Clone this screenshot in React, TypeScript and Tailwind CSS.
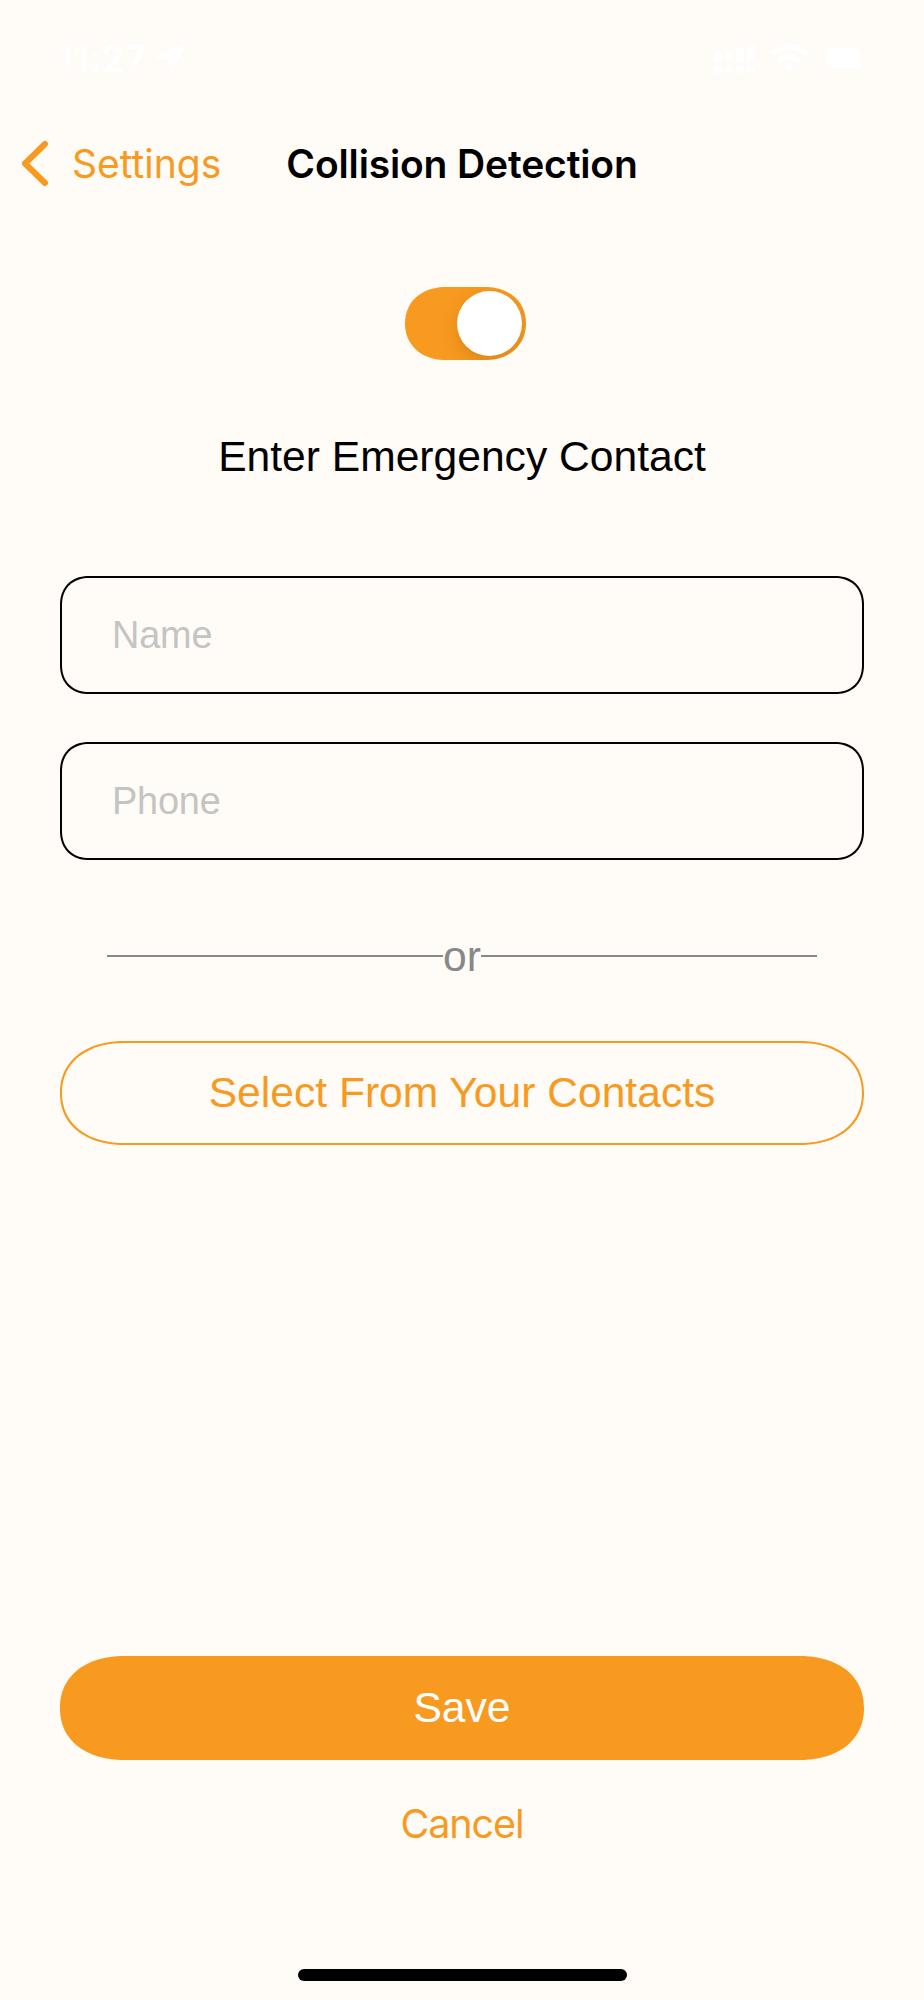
import React, { useState } from 'react';

const LocationIcon: React.FC = () => (
  <svg className="w-[30px] h-[28px]" viewBox="0 0 30 28" fill="white">
    <path d="M27 .6 2 11.2c-2.400 1-1.900 3.300.5 3.300l10.700.1.100 10.800c0 2.600 2.400 3 3.500.6L28.800 2.200C29.300.8 28.400 0 27 .6z" />
  </svg>
);

const SignalIcon: React.FC = () => (
  <svg className="w-[42px] h-[30px]" viewBox="0 0 42 30" fill="white">
    <rect x="0.500" y="9" width="7" height="9" rx="2" />
    <rect x="11.500" y="6.500" width="7" height="11.500" rx="2" />
    <rect x="22" y="3.500" width="7.500" height="14.500" rx="2" />
    <rect x="33" y="0" width="7.500" height="18" rx="2" />
    <circle cx="4" cy="25.500" r="4" />
    <circle cx="15" cy="25.500" r="4" />
    <circle cx="26" cy="25.500" r="4" />
    <circle cx="36.700" cy="25.500" r="4" />
  </svg>
);

const WifiIcon: React.FC = () => (
  <svg className="w-[40px] h-[28px]" viewBox="0 0 40 28" fill="none" stroke="white" strokeWidth="5.500">
    <path d="M2.500 10.200a25 25 0 0 1 35 0" />
    <path d="M9 17.300a16 16 0 0 1 22 0" />
    <path d="M20 27.500l-5.500-5.400a8 8 0 0 1 11 0z" fill="white" stroke="none" />
  </svg>
);

const BatteryIcon: React.FC = () => (
  <svg className="w-[60px] h-[29px]" viewBox="0 0 60 29" fill="white">
    <rect x="1" y="1" width="52" height="27" rx="8" fill="none" stroke="white" strokeOpacity="0.400" strokeWidth="2" />
    <rect x="4.500" y="4.500" width="33.500" height="19.500" rx="4.500" />
    <path d="M56 10v9c2-.8 3-2.500 3-4.500s-1-3.700-3-4.500z" fillOpacity="0.400" />
  </svg>
);

interface ContactFieldProps {
  label: string;
  type: string;
  value: string;
  onChange: (value: string) => void;
}

const ContactField: React.FC<ContactFieldProps> = ({ label, type, value, onChange }) => (
  <input
    type={type}
    value={value}
    placeholder={label}
    aria-label={label}
    onChange={(e) => onChange(e.target.value)}
    className="block w-full h-[118px] px-[50px] border-2 border-black rounded-[29px] [corner-shape:superellipse(1.14)] bg-transparent text-[37.9px] tracking-[-0.2px] text-black placeholder:text-[#c4c4c2] outline-none"
  />
);

export default function App() {
  const [enabled, setEnabled] = useState(true);
  const [name, setName] = useState('');
  const [phone, setPhone] = useState('');

  return (
    <div className="w-[924px] h-[2000px] flex flex-col bg-[#fffcf7] overflow-hidden font-['Liberation_Sans',Arial,sans-serif]">
      {/* Status bar */}
      <div className="h-[100px] shrink-0 flex items-start justify-between pl-[58px] pr-[42px] pt-[44px] text-white">
        <div className="flex items-start gap-[10px]">
          <span className="w-[88px] text-[37px] leading-[30px] font-semibold tracking-[0.2px] whitespace-nowrap font-['Inter',sans-serif]">11:27</span>
          <LocationIcon />
        </div>
        <div className="flex items-start gap-[13px]">
          <SignalIcon />
          <WifiIcon />
          <BatteryIcon />
        </div>
      </div>

      {/* Navigation */}
      <header className="h-[128px] shrink-0 grid grid-cols-[1fr_352px_1fr] items-center font-['Inter',sans-serif]">
        <button className="flex items-center pl-[20px] text-[#f89a1f]">
          <svg className="w-[30px] h-[48px]" viewBox="0 0 30 48" fill="none" stroke="currentColor" strokeWidth="6" strokeLinecap="round" strokeLinejoin="round">
            <path d="M25 4 5 23.500 25 43" />
          </svg>
          <span className="ml-[22px] text-[39px] leading-[48px] whitespace-nowrap">Settings</span>
        </button>
        <h1 className="text-[39px] leading-[48px] font-semibold tracking-[-0.15px] text-black text-center whitespace-nowrap">Collision Detection</h1>
      </header>

      <main className="flex-1 flex flex-col items-center px-[60px] pt-[59px]">
        <button
          role="switch"
          aria-checked={enabled}
          aria-label="Collision detection"
          onClick={() => setEnabled(!enabled)}
          className={`w-[121px] h-[73px] p-[4px] ml-[6px] flex shrink-0 items-center rounded-[41px/36.5px] [corner-shape:superellipse(1.1)] overflow-hidden ${enabled ? 'justify-end bg-[#f89a1f]' : 'justify-start bg-gray-300'}`}
        >
          <span className="w-[65px] h-[65px] rounded-full bg-white shadow-[0_6px_18px_rgba(0,0,0,0.13)]" />
        </button>

        <h2 className="mt-[72px] text-[42.6px] leading-[48px] text-black whitespace-nowrap">Enter Emergency Contact</h2>

        <div className="w-full mt-[96px] flex flex-col gap-[48px]">
          <ContactField label="Name" type="text" value={name} onChange={setName} />
          <ContactField label="Phone" type="tel" value={phone} onChange={setPhone} />
        </div>

        <div className="w-full mt-[72px] px-[47px] h-[48px] flex items-center text-[#88888b]">
          <div className="flex-1 h-[2px] bg-[#88888b]" />
          <span className="text-[42.6px] leading-[48px]">or</span>
          <div className="flex-1 h-[2px] bg-[#88888b]" />
        </div>

        <button className="w-full h-[104px] mt-[61px] shrink-0 border-2 border-[#f89a1f] rounded-[65px/52px] [corner-shape:superellipse(1.14)] text-[42.6px] text-[#f89a1f] whitespace-nowrap">
          Select From Your Contacts
        </button>

        <button className="w-full h-[104px] mt-[511px] shrink-0 rounded-[65px/52px] [corner-shape:superellipse(1.14)] bg-[#f89a1f] text-[42.6px] text-white">
          Save
        </button>
        <button className="mt-[40px] text-[39.5px] leading-[48px] tracking-[-1.1px] text-[#f89a1f] font-['Inter',sans-serif]">Cancel</button>
      </main>

      {/* Home indicator */}
      <div className="w-[329px] h-[12px] mb-[19px] shrink-0 self-center rounded-full bg-black" />
    </div>
  );
}
